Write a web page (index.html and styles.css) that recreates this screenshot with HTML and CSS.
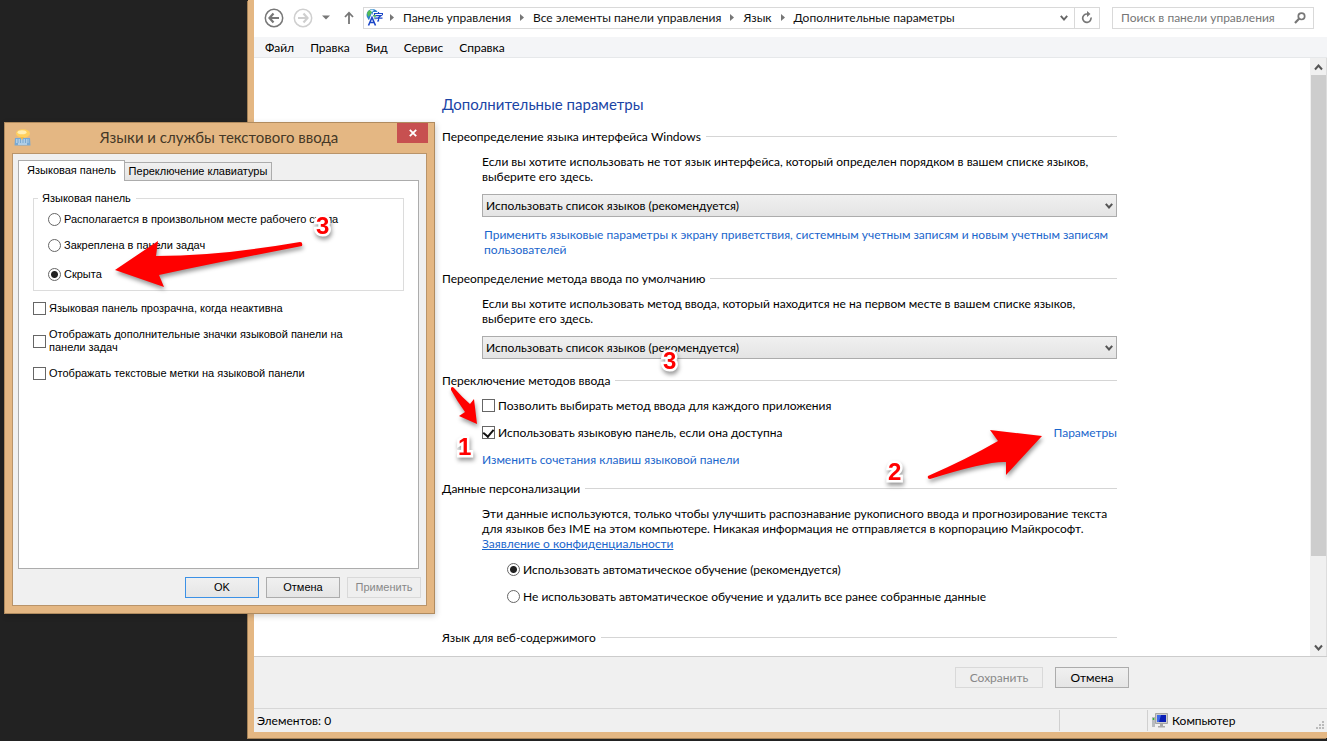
FILE: index.html
```html
<!DOCTYPE html>
<html lang="ru">
<head>
<meta charset="utf-8">
<title>Дополнительные параметры</title>
<link rel="stylesheet" href="styles.css">
</head>
<body>
<div class="desktop">
  <main class="window">
    <header class="navbar">
      <div class="nav-buttons">
        <button class="icon-btn" aria-label="Назад"><svg width="20" height="20" viewBox="0 0 20 20" fill="none" stroke="#777"><circle cx="10" cy="10" r="8.7" stroke-width="1.5"/><path d="M15 10H6M9.500 5.500L5.500 10l4 4.500" stroke-width="2.200"/></svg></button>
        <button class="icon-btn" aria-label="Вперёд"><svg width="20" height="20" viewBox="0 0 20 20" fill="none" stroke="#cfcfcf"><circle cx="10" cy="10" r="8.700" stroke-width="1.500"/><path d="M5 10h9M10.500 5.500l4 4.500-4 4.500" stroke-width="2.200"/></svg></button>
        <button class="icon-btn" aria-label="Последние"><svg width="8" height="5" viewBox="0 0 8 5"><path d="M0 .5h8L4 4.500z" fill="#777"/></svg></button>
        <button class="icon-btn" aria-label="Вверх"><svg width="10" height="14" viewBox="0 0 10 14" fill="none" stroke="#777" stroke-width="1.800"><path d="M5 13V2M1 6l4-4.300L9 6"/></svg></button>
      </div>
      <nav class="address">
        <svg width="17" height="17" viewBox="0 0 17 17"><circle cx="6.500" cy="6" r="6" fill="#2a7fd0"/><path d="M1 4Q3 0 7 1L5 5 2 8zM7 6l4-1 1 3-3 3z" fill="#55bd55"/><path d="M4 1.500Q6 0 8 1L6 3z" fill="#d7f2ff"/><path d="M2.500 16.500L6 8l3.500 8.500M3.500 13.500h5" stroke="#fff" stroke-width="3.200" fill="none"/><path d="M2.500 16.500L6 8.500l3.500 8M3.500 13.500h5" stroke="#1b46c8" stroke-width="1.600" fill="none"/><path d="M8.500 6V4.500h8V6M12.500 3v1.500M10 6.700h5l-2.500 1.800V12h-1.500M8.500 9.200h8" stroke="#fff" stroke-width="3" fill="none"/><path d="M8.500 6V4.500h8V6M12.500 3v1.500M10 6.700h5l-2.500 1.800V12h-1.500M8.500 9.200h8" stroke="#1b46c8" stroke-width="1.200" fill="none"/></svg>
        <svg class="sep" width="4" height="7" viewBox="0 0 4 7"><path d="M0 0l4 3.500L0 7z"/></svg>
        <a href="#">Панель управления</a>
        <svg class="sep" width="4" height="7" viewBox="0 0 4 7"><path d="M0 0l4 3.500L0 7z"/></svg>
        <a href="#">Все элементы панели управления</a>
        <svg class="sep" width="4" height="7" viewBox="0 0 4 7"><path d="M0 0l4 3.500L0 7z"/></svg>
        <a href="#">Язык</a>
        <svg class="sep" width="4" height="7" viewBox="0 0 4 7"><path d="M0 0l4 3.500L0 7z"/></svg>
        <a href="#">Дополнительные параметры</a>
        <button class="icon-btn history" aria-label="История"><svg width="8" height="6" viewBox="0 0 8 6" fill="none" stroke="#666" stroke-width="1.900"><path d="M.8.8L4 4.500 7.200.8"/></svg></button>
        <button class="icon-btn refresh" aria-label="Обновить"><svg width="12" height="13" viewBox="0 0 12 13" fill="none" stroke="#777" stroke-width="1.700"><path d="M10 6.500A4.200 4.200 0 1 1 6 3h2"/><path d="M6 0l3.500 3L6 6z" fill="#777" stroke="none"/></svg></button>
      </nav>
      <div class="search">
        <input type="text" placeholder="Поиск в панели управления" aria-label="Поиск в панели управления">
        <svg width="12" height="12" viewBox="0 0 12 12" fill="none" stroke="#777"><circle cx="7.500" cy="4.300" r="3.200" stroke-width="1.700"/><path d="M5 6.800L1 11" stroke-width="2.200"/></svg>
      </div>
    </header>
    <nav class="menubar"><button>Файл</button><button>Правка</button><button>Вид</button><button>Сервис</button><button>Справка</button></nav>

    <div class="view">
      <div class="page">
        <h1>Дополнительные параметры</h1>
        <section>
          <h2>Переопределение языка интерфейса Windows</h2>
          <div class="body">
            <p id="ui-hint">Если вы хотите использовать не тот язык интерфейса, который определен порядком в вашем списке языков,<br>выберите его здесь.</p>
            <div class="combo"><select aria-labelledby="ui-hint"><option>Использовать список языков (рекомендуется)</option></select><svg width="8" height="6" viewBox="0 0 8 6"><path d="M.8.8L4 4.500 7.200.8"/></svg></div>
            <a class="indent" href="#">Применить языковые параметры к экрану приветствия, системным учетным записям и новым учетным записям<br>пользователей</a>
          </div>
        </section>
        <section>
          <h2>Переопределение метода ввода по умолчанию</h2>
          <div class="body">
            <p id="input-hint">Если вы хотите использовать метод ввода, который находится не на первом месте в вашем списке языков,<br>выберите его здесь.</p>
            <div class="combo"><select aria-labelledby="input-hint"><option>Использовать список языков (рекомендуется)</option></select><svg width="8" height="6" viewBox="0 0 8 6"><path d="M.8.8L4 4.500 7.200.8"/></svg></div>
          </div>
        </section>
        <section>
          <h2>Переключение методов ввода</h2>
          <div class="body spaced">
            <label><input type="checkbox">Позволить выбирать метод ввода для каждого приложения</label>
            <div class="split"><label><input type="checkbox" checked>Использовать языковую панель, если она доступна</label><a href="#">Параметры</a></div>
            <a href="#">Изменить сочетания клавиш языковой панели</a>
          </div>
        </section>
        <section>
          <h2>Данные персонализации</h2>
          <div class="body">
            <p>Эти данные используются, только чтобы улучшить распознавание рукописного ввода и прогнозирование текста<br>для языков без IME на этом компьютере. Никакая информация не отправляется в корпорацию Майкрософт.<br><a class="underlined" href="#">Заявление о конфиденциальности</a></p>
            <div class="choices">
              <label><input type="radio" name="learn" checked>Использовать автоматическое обучение (рекомендуется)</label>
              <label><input type="radio" name="learn">Не использовать автоматическое обучение и удалить все ранее собранные данные</label>
            </div>
          </div>
        </section>
        <section class="last"><h2>Язык для веб-содержимого</h2></section>
      </div>
      <div class="scrollbar">
        <svg width="9" height="7" viewBox="0 0 9 7"><path d="M1 5.500l3.500-4L8 5.500"/></svg>
        <div class="thumb"></div>
        <svg width="9" height="7" viewBox="0 0 9 7"><path d="M1 1.500l3.500 4L8 1.500"/></svg>
      </div>
    </div>

    <div class="actions"><button class="btn" disabled>Сохранить</button><button class="btn">Отмена</button></div>
    <footer class="status">
      <span class="count">Элементов: 0</span><span class="cell"></span>
      <span class="computer"><svg width="16" height="15" viewBox="0 0 16 15"><path d="M0 4h3v10H0z" fill="#b9bcbf"/><path d="M.8 5h1.400v2H.8z" fill="#36b536"/><path d="M3.500.5h12v10h-12z" fill="#ccc" stroke="#a5a5a5"/><path d="M5 2h9v7H5z" fill="#0a1db5"/><path d="M5 2h4l-2 7H5z" fill="#3e68e8"/><path d="M8 11h3v2h2v1.500H6V13h2z" fill="#aaa"/></svg>Компьютер</span>
      <svg class="grip" width="9" height="9" viewBox="0 0 9 9"><path d="M6 0h2v2H6zM3 3h2v2H3zM6 3h2v2H6zM0 6h2v2H0zM3 6h2v2H3zM6 6h2v2H6z" fill="#bbb"/></svg>
    </footer>
  </main>

  <section class="dialog" role="dialog" aria-labelledby="dlg-title">
    <header class="titlebar">
      <svg width="17" height="17" viewBox="0 0 17 17"><path d="M1 9h15l.5 7.500H.5z" fill="#79a9d2"/><path d="M2 11h13M2 13h13" stroke="#e6f2fb" stroke-width="1" stroke-dasharray="1.500 1"/><path d="M4 15h9" stroke="#e6f2fb"/><ellipse cx="9" cy="4.500" rx="7" ry="4.200" fill="#ffd05c"/><ellipse cx="8" cy="3.300" rx="4.500" ry="2" fill="#ffefb5"/><path d="M6 8h4l-2 3z" fill="#f5bd45"/></svg>
      <h2 id="dlg-title">Языки и службы текстового ввода</h2>
      <button class="close" aria-label="Закрыть"><svg width="8" height="8" viewBox="0 0 8 8"><path d="M.8.8l6.400 6.400M7.200.8L.8 7.200" stroke="#fff" stroke-width="1.800"/></svg></button>
    </header>
    <div class="client">
      <div class="tabs" role="tablist"><button class="tab active" role="tab">Языковая панель</button><button class="tab" role="tab">Переключение клавиатуры</button></div>
      <div class="panel">
        <fieldset>
          <legend>Языковая панель</legend>
          <label><input type="radio" name="bar">Располагается в произвольном месте рабочего стола</label>
          <label><input type="radio" name="bar">Закреплена в панели задач</label>
          <label><input type="radio" name="bar" checked>Скрыта</label>
        </fieldset>
        <label><input type="checkbox">Языковая панель прозрачна, когда неактивна</label>
        <label><input type="checkbox"><span>Отображать дополнительные значки языковой панели на<br>панели задач</span></label>
        <label><input type="checkbox">Отображать текстовые метки на языковой панели</label>
      </div>
      <div class="dialog-actions"><button class="btn primary">OK</button><button class="btn">Отмена</button><button class="btn" disabled>Применить</button></div>
    </div>
  </section>

  <svg class="mark arrow-hidden" width="190" height="56" viewBox="0 0 190 56"><path d="M0 31L43 2 41 17Q105 17 185 3Q188 3 187 7Q110 22 44 36L49 48z"/></svg>
  <svg class="mark arrow-check" width="32" height="44" viewBox="0 0 32 44"><path d="M1 2Q2 0 4 2Q12 11 20 18L24 13 27 38 9 30 15 26Q7 15 1 4z"/></svg>
  <svg class="mark arrow-params" width="118" height="58" viewBox="0 0 118 58"><path d="M1 47Q40 30 71 12L63 1 115 7 79 46V33Q60 32 3 50Q0 50 1 47z"/></svg>
  <span class="mark number n-hidden">3</span>
  <span class="mark number n-combo">3</span>
  <span class="mark number n-check">1</span>
  <span class="mark number n-params">2</span>
</div>
</body>
</html>
```
FILE: styles.css
```css
* { box-sizing: border-box; }
body { margin: 0; font: 12px/15px Lato, "Noto Sans", sans-serif; color: #000; }
button, input, select { font: inherit; color: inherit; }
button { padding: 0; }
h1, h2, p { margin: 0; font-weight: normal; }
a { color: #1a66cc; text-decoration: none; }
svg { display: block; flex: none; }

.desktop { position: relative; height: 100vh; overflow: hidden; background: #222; }

.window {
  position: absolute; inset: 0 0 3px 248px;
  display: flex; flex-direction: column;
  border: solid #e4b783; border-width: 0 0 6px 6px;
  background: #fff;
  box-shadow: -1px 1px 0 #a58258;
}
.navbar { display: flex; align-items: center; gap: 12px; height: 37px; padding: 0 13px 2px 10px; }
.nav-buttons { display: flex; align-items: center; gap: 9px; margin-right: -3px; }
.nav-buttons .icon-btn:nth-child(4) { margin-left: 5px; }
.icon-btn { border: 0; background: none; display: grid; place-items: center; }
.address { flex: 1; display: flex; align-items: center; height: 22px; padding-left: 2px; border: 1px solid #d9d9d9; white-space: nowrap; }
.address a { color: #111; }
.sep { margin: 0 9px; fill: #777; }
.sep:nth-of-type(2) { margin-left: 7px; }
.history { margin-left: auto; width: 20px; }
.refresh { align-self: stretch; width: 25px; border-left: 1px solid #d9d9d9; }
.search { display: flex; align-items: center; width: 202px; height: 22px; padding: 0 7px 0 8px; border: 1px solid #d9d9d9; }
.search input { flex: 1; min-width: 0; padding: 0; border: 0; outline: 0; background: none; }
.search input::placeholder { color: #767676; opacity: 1; }
.menubar { display: flex; gap: 16px; height: 21px; padding-left: 11px; background: #f4f5f7; border-bottom: 1px solid #e6e8ea; }
.menubar button { border: 0; background: none; }

.view { flex: 1; min-height: 0; display: flex; overflow: hidden; }
.page { flex: 1; min-width: 0; padding: 37px 193px 0 188px; overflow: hidden; white-space: nowrap; }
.page h1 { margin-bottom: 16px; font-size: 15px; line-height: 18px; color: #1a44a5; }
.page section { margin-bottom: 14px; }
.page .last { margin-top: 26px; }
.page h2 { display: flex; align-items: center; gap: 5px; font-size: 12px; line-height: 15px; }
.page h2::after { content: ""; flex: 1; height: 1px; background: #d5d5d5; }
.body { display: flex; flex-direction: column; align-items: stretch; gap: 10px; padding: 10px 0 0 40px; }
.spaced { gap: 12px; }
.indent { margin-left: 2px; }
.combo { position: relative; }
.combo select { display: block; appearance: none; width: 100%; height: 23px; padding: 0 20px 0 3px; border: 1px solid #acacac; border-radius: 0; background: linear-gradient(#f0f0f0, #e4e4e4); }
.combo svg { position: absolute; right: 4px; top: 9px; fill: none; stroke: #555; stroke-width: 2; }
.underlined { text-decoration: underline; }
.split { display: flex; justify-content: space-between; }
.choices { display: flex; flex-direction: column; gap: 12px; padding: 1px 0 0 25px; }

label { display: flex; align-items: center; gap: 3px; }
input[type="checkbox"], input[type="radio"] { appearance: none; flex: none; width: 13px; height: 13px; margin: 0; border: 1px solid #666; background: #fff; }
input[type="radio"] { border-radius: 50%; }
input[type="radio"]:checked { background: radial-gradient(circle, #222 3px, #fff 4px); }
input[type="checkbox"]:checked { display: grid; place-items: center; }
input[type="checkbox"]:checked::before { content: ""; width: 5px; height: 8px; margin-bottom: 2px; border: solid #111; border-width: 0 2px 2px 0; transform: rotate(40deg); }

.scrollbar { display: flex; flex-direction: column; align-items: center; justify-content: space-between; width: 17px; padding: 6px 1px 5px; background: #f0f0f0; border-right: 1px solid #ddd; }
.scrollbar svg { fill: none; stroke: #555; stroke-width: 2; }
.thumb { flex: 0 0 82%; width: 15px; margin: 4px 0 auto; background: #cdcdcd; }

.actions { display: flex; justify-content: flex-end; gap: 12px; height: 52px; padding: 10px 198px 0 0; background: #f0f0f0; border-top: 1px solid #ccc; }
.btn { width: 74px; height: 21px; border: 1px solid #acacac; background: linear-gradient(#f0f0f0, #e5e5e5); }
.btn:disabled { background: #efefef; border-color: #d9d9d9; color: #888; }
.actions .btn:disabled { width: 88px; }
.status { position: relative; display: flex; height: 24px; padding: 1px 0; background: #f0f0f0; border-top: 1px solid #d7d7d7; line-height: 22px; }
.count { flex: 1; padding-left: 3px; }
.cell { width: 88px; border-left: 1px solid #d0d0d0; }
.computer { display: flex; align-items: center; gap: 4px; width: 180px; padding-left: 4px; border-left: 1px solid #d0d0d0; }
.grip { position: absolute; right: 2px; bottom: 2px; }

.dialog {
  position: absolute; left: 4px; top: 122px; width: 431px; height: 492px;
  display: flex; flex-direction: column; padding: 0 7px 7px;
  border: 1px solid #b08b5f; background: #e4b783;
  box-shadow: 1px 2px 6px rgba(0, 0, 0, .18);
  font-family: "Liberation Sans", Arial, sans-serif; font-size: 11px; line-height: 13px;
}
.titlebar { display: flex; align-items: flex-start; height: 30px; }
.titlebar > svg { margin: 6px 0 0 2px; }
.titlebar h2 { flex: 1; padding-left: 10px; font: 15px/28px Lato, "Noto Sans", sans-serif; color: #443827; text-align: center; }
.close { width: 31px; height: 20px; border: 0; background: #c75050; display: grid; place-items: center; margin-right: -1px; }
.client { flex: 1; display: flex; flex-direction: column; padding: 6px 7px 6px 5px; border: 1px solid #b9946a; background: #f0f0f0; }
.tabs { display: flex; align-items: flex-end; height: 20px; }
.tab { height: 18px; width: 147px; border: 1px solid #acacac; border-width: 1px 1px 0 0; background: linear-gradient(#f0f0f0, #e5e5e5); }
.tab.active { position: relative; width: 107px; height: 21px; margin-bottom: -1px; padding-bottom: 2px; border-left-width: 1px; background: #fff; }
.panel { flex: 1; display: flex; flex-direction: column; align-items: flex-start; padding: 11px 14px; border: 1px solid #acacac; background: #fff; }
.panel fieldset { display: flex; flex-direction: column; align-self: stretch; gap: 13px; height: 99px; margin: 0 0 11px; padding: 8px 14px; border: 1px solid #dcdcdc; }
.panel legend { margin-left: -10px; padding: 0 5px 0 4px; }
.panel fieldset label:last-child { margin-top: 3px; }
.panel > label { min-height: 13px; margin-bottom: 13px; }
.dialog-actions { display: flex; justify-content: flex-end; gap: 7px; padding: 8px 0 1px; margin-right: -2px; }
.btn.primary { border-color: #3c91e6; }

.mark { position: absolute; filter: drop-shadow(1px 3px 2px rgba(0, 0, 0, .4)); pointer-events: none; }
.mark path { fill: #f00; }
.arrow-hidden { left: 115px; top: 239px; }
.arrow-check { left: 450px; top: 386px; }
.arrow-params { left: 927px; top: 429px; }
.number { font: bold 24px/24px "Liberation Sans", Arial, sans-serif; color: #f00; -webkit-text-stroke: 5px #fff; paint-order: stroke fill; }
.n-hidden { left: 316px; top: 214px; }
.n-combo { left: 663px; top: 349px; }
.n-check { left: 458px; top: 435px; }
.n-params { left: 888px; top: 460px; }
```
